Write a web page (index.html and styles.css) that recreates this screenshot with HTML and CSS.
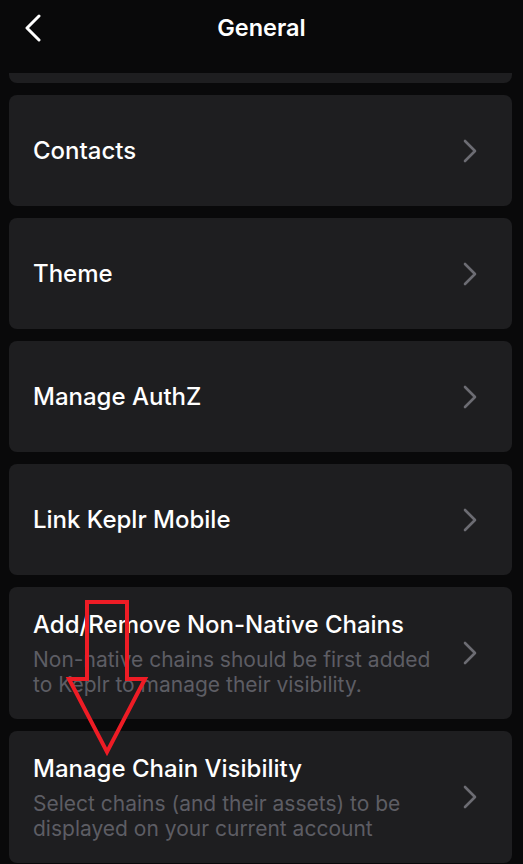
FILE: index.html
```html
<!DOCTYPE html>
<html>
<head>
<meta charset="utf-8">
<link rel="stylesheet" href="styles.css">
</head>
<body>
<div class="page">
  <header class="topbar">
    <button class="back" aria-label="Back">
      <svg width="18" height="28" viewBox="0 0 18 28"><path d="M15 2 L3 14 L15 26" fill="none" stroke="#fff" stroke-width="3" stroke-linecap="round" stroke-linejoin="round"/></svg>
    </button>
    <h1 class="title">General</h1>
  </header>
  <div class="list">
    <div class="card stub"></div>
    <div class="card"><div class="text"><div class="label">Contacts</div></div><svg class="chev" width="16" height="24" viewBox="0 0 16 24"><path d="M3 2 L13 12 L3 22" fill="none" stroke="#6c6c73" stroke-width="2.6" stroke-linecap="round" stroke-linejoin="round"/></svg></div>
    <div class="card"><div class="text"><div class="label">Theme</div></div><svg class="chev" width="16" height="24" viewBox="0 0 16 24"><path d="M3 2 L13 12 L3 22" fill="none" stroke="#6c6c73" stroke-width="2.6" stroke-linecap="round" stroke-linejoin="round"/></svg></div>
    <div class="card"><div class="text"><div class="label">Manage AuthZ</div></div><svg class="chev" width="16" height="24" viewBox="0 0 16 24"><path d="M3 2 L13 12 L3 22" fill="none" stroke="#6c6c73" stroke-width="2.6" stroke-linecap="round" stroke-linejoin="round"/></svg></div>
    <div class="card"><div class="text"><div class="label">Link Keplr Mobile</div></div><svg class="chev" width="16" height="24" viewBox="0 0 16 24"><path d="M3 2 L13 12 L3 22" fill="none" stroke="#6c6c73" stroke-width="2.6" stroke-linecap="round" stroke-linejoin="round"/></svg></div>
    <div class="card"><div class="text"><div class="label">Add/Remove Non-Native Chains</div><div class="sub">Non-native chains should be first added to Keplr to manage their visibility.</div></div><svg class="chev" width="16" height="24" viewBox="0 0 16 24"><path d="M3 2 L13 12 L3 22" fill="none" stroke="#6c6c73" stroke-width="2.6" stroke-linecap="round" stroke-linejoin="round"/></svg></div>
    <div class="card"><div class="text"><div class="label">Manage Chain Visibility</div><div class="sub">Select chains (and their assets) to be displayed on your current account</div></div><svg class="chev" width="16" height="24" viewBox="0 0 16 24"><path d="M3 2 L13 12 L3 22" fill="none" stroke="#6c6c73" stroke-width="2.6" stroke-linecap="round" stroke-linejoin="round"/></svg></div>
  </div>
  <svg class="annot" width="523" height="864" viewBox="0 0 523 864"><polygon points="87,602 127,602 127,679 145,679 107,752 69,679 87,679" fill="none" stroke="#ee1c25" stroke-width="4" stroke-linejoin="miter"/></svg>
</div>
</body>
</html>
```
FILE: styles.css
```css
* { box-sizing: border-box; }
html, body { margin: 0; padding: 0; background: #09090a; }
body { font-family: Inter, "Noto Sans", sans-serif; color: #fff; }
.page { position: relative; width: 523px; height: 864px; overflow: hidden; }
.topbar { height: 73px; padding-bottom: 18px; display: flex; align-items: center; justify-content: center; position: relative; }
.back { position: absolute; left: 22px; top: 13px; background: none; border: 0; padding: 0; width: 22px; height: 30px; display: flex; align-items: center; justify-content: center; }
.title { margin: 0; font-size: 23.5px; font-weight: 600; line-height: 28px; }
.list { display: flex; flex-direction: column; gap: 12px; padding: 0 11px 0 9px; }
.card { background: #1e1e20; border-radius: 8px; min-height: 111px; display: flex; align-items: center; padding: 22.5px 34px 22.5px 24px; gap: 16px; }
.card.stub { min-height: 0; height: 10px; padding: 0; border-radius: 0 0 8px 8px; }
.text { flex: 1; }
.label { font-size: 24px; font-weight: 500; line-height: 29px; color: #fff; }
.sub { font-size: 21px; line-height: 25px; color: #5d5d64; margin-top: 8px; }
.chev { flex: none; }
.annot { position: absolute; left: 0; top: 0; pointer-events: none; }
```
